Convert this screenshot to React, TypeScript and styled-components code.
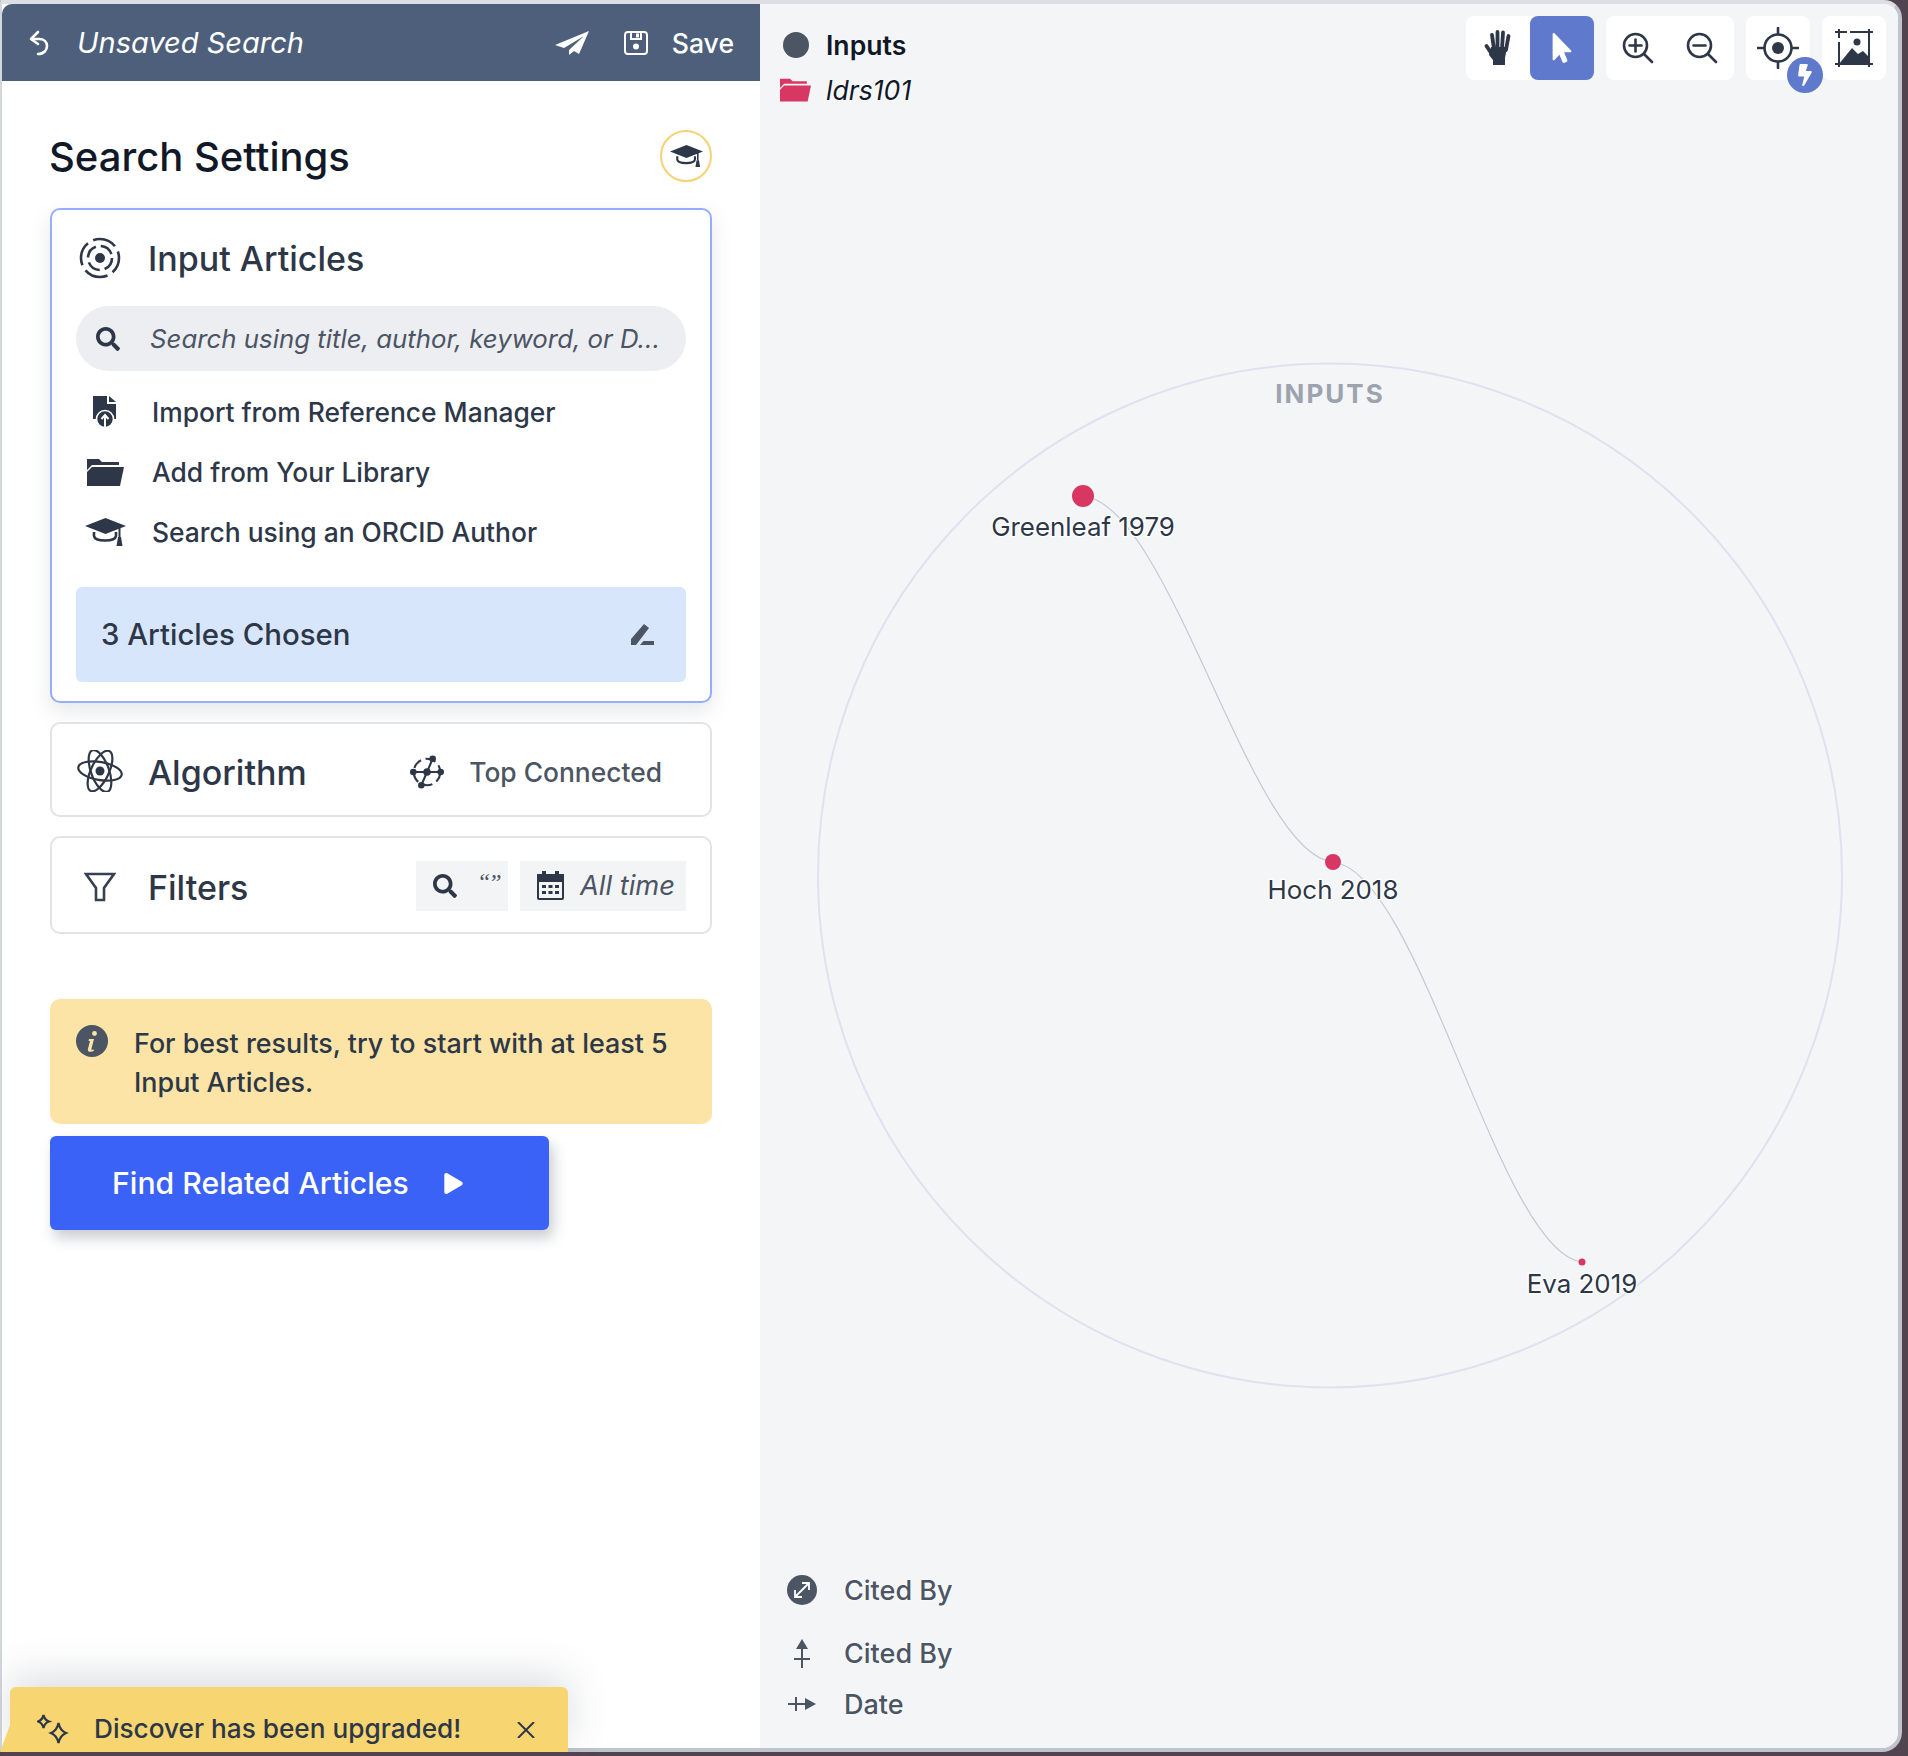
import React from 'react';
import styled, {createGlobalStyle} from 'styled-components';
import {FaBolt, FaMousePointer, FaPlay, FaSearch} from 'react-icons/fa';

const GlobalStyle = createGlobalStyle`
  html, body {
    margin: 0;
    padding: 0;
    background: #52444f;
  }

  * {
    box-sizing: border-box;
  }

  svg {
    flex: none;
    display: block;
  }

  body {
    font-family: Inter, "Open Sans", sans-serif;
    color: #2d3748;
  }
`;

const UndoIcon = () => (
    <svg width="22" height="26" viewBox="0 0 22 26" fill="none" stroke="#fff" strokeWidth="2.6" strokeLinecap="round" strokeLinejoin="round">
        <path d="M9 2 2 9l7 5"/>
        <path d="M3 9h7c5 0 8 3 8 7s-3 8-9 8"/>
    </svg>
);

const PlaneIcon = () => (
    <svg width="34" height="24" viewBox="0 0 34 24" fill="#fff">
        <path d="M34 0 0 14l9 3L29 5 14 19v5l5-4 5 3z"/>
    </svg>
);

const SaveIcon = () => (
    <svg width="24" height="24" viewBox="0 0 24 24" fill="none" stroke="#fff" strokeWidth="2">
        <rect x="1" y="1" width="22" height="22" rx="3"/>
        <path d="M7 1v7h10V1"/>
        <path d="M12 2.500h3v4h-3z" fill="#fff" stroke="none"/>
        <circle cx="12" cy="15.500" r="3" fill="#fff" stroke="none"/>
    </svg>
);

const CapIcon = ({width}: {width: number}) => (
    <svg width={width} height={width * 28 / 41} viewBox="0 0 41 28" fill="#2d3748">
        <path d="M20.500 0 41 8 20.500 16 0 8z"/>
        <path d="M9 14v4c1 6 21 6 22 0v-4" fill="none" stroke="#2d3748" strokeWidth="2.600"/>
        <path d="M34.500 9v10" fill="none" stroke="#2d3748" strokeWidth="2"/>
        <path d="M33 19h3l1.500 9h-6z"/>
    </svg>
);

const FolderIcon = ({width, color}: {width: number; color: string}) => (
    <svg width={width} height={width * 28 / 37} viewBox="0 0 37 28" fill={color}>
        <path d="M0 1h12l3 3h17v3H5l-5 5z"/>
        <path d="M0 28V14l5-5h32l-4 19z"/>
    </svg>
);

const RingsIcon = () => (
    <svg width="42" height="42" viewBox="0 0 42 42" fill="none" stroke="#2d3748" strokeWidth="2.600">
        <circle cx="21" cy="21" r="5" fill="#2d3748" stroke="none"/>
        <circle cx="21" cy="21" r="12" strokeDasharray="14 5"/>
        <circle cx="21" cy="21" r="19" strokeDasharray="24 6" strokeDashoffset="8"/>
    </svg>
);

const FileUploadIcon = () => (
    <svg width="26" height="34" viewBox="0 0 26 34">
        <path d="M1 1h14v8h9v15H1z" fill="#2d3748"/>
        <path d="M17 1l7 6h-7z" fill="#2d3748"/>
        <circle cx="13" cy="24" r="8.500" fill="#2d3748" stroke="#fff" strokeWidth="1.600"/>
        <path d="M13 32v-11M9.500 24l3.500-4 3.500 4" fill="none" stroke="#fff" strokeWidth="2"/>
    </svg>
);

const PenIcon = () => (
    <svg width="23" height="21" viewBox="0 0 23 21" fill="#4b5563">
        <path d="M0 21v-6L13 0l5 4L5 21z"/>
        <path d="M9 21h14v-4H12.500z"/>
    </svg>
);

const AtomIcon = () => (
    <svg width="46" height="42" viewBox="0 0 46 42" fill="none" stroke="#2d3748" strokeWidth="2.200">
        <ellipse cx="23" cy="21" rx="22" ry="9" transform="rotate(10 23 21)"/>
        <ellipse cx="23" cy="21" rx="22" ry="9" transform="rotate(70 23 21)"/>
        <ellipse cx="23" cy="21" rx="22" ry="9" transform="rotate(115 23 21)"/>
        <circle cx="23" cy="21" r="4.500" fill="#2d3748" stroke="none"/>
    </svg>
);

const ConnectedIcon = () => (
    <svg width="34" height="36" viewBox="0 0 36 36" fill="none" stroke="#2d3748" strokeWidth="2.200">
        <circle cx="18" cy="18" r="14" strokeDasharray="11 5"/>
        <path d="M3 18h30M24 4 12 32"/>
        <circle cx="18" cy="18" r="4" fill="#2d3748" stroke="none"/>
        <circle cx="3.500" cy="18" r="3.500" fill="#2d3748" stroke="none"/>
        <circle cx="32.500" cy="18" r="3.500" fill="#2d3748" stroke="none"/>
        <circle cx="24" cy="4" r="3.500" fill="#2d3748" stroke="none"/>
        <circle cx="12" cy="32" r="3.500" fill="#2d3748" stroke="none"/>
    </svg>
);

const FunnelIcon = () => (
    <svg width="32" height="30" viewBox="0 0 32 30" fill="none" stroke="#374151" strokeWidth="2.600">
        <path d="M2 2h28L20 16v12h-8V16z"/>
    </svg>
);

const CalendarIcon = () => (
    <svg width="27" height="29" viewBox="0 0 27 29" fill="#2d3748">
        <path d="M5 0h4v3h9V0h4v3h5v8H0V3h5z"/>
        <path d="M1 10h25v17a1 1 0 0 1-1 1H2a1 1 0 0 1-1-1z" fill="none" stroke="#2d3748" strokeWidth="2"/>
        <path d="M5 14h4v3H5zM11.500 14h4v3h-4zM18 14h4v3h-4zM5 20h4v3H5zM11.500 20h4v3h-4zM18 20h4v3h-4z"/>
    </svg>
);

const InfoIcon = () => (
    <svg width="32" height="32" viewBox="0 0 32 32">
        <circle cx="16" cy="16" r="16" fill="#4b5563"/>
        <circle cx="18.500" cy="8.500" r="2.400" fill="#fbe4a5"/>
        <path d="M13 14h5l-2.600 10c-.2.9.5 1.200 2.600.4l-.3 1.600c-3 1.500-6.500 1-5.800-2L14 16h-1.400z" fill="#fbe4a5"/>
    </svg>
);

const SparkIcon = () => (
    <svg width="32" height="32" viewBox="0 0 32 32" fill="none" stroke="#2d3748" strokeWidth="2.200" strokeLinejoin="miter">
        <path d="M6.500 2Q7.500 7 12 8.500 7.500 10 6.500 15 5.500 10 1 8.500 5.500 7 6.500 2z"/>
        <path d="M21.500 10Q23 17.500 29 20 23 22.500 21.500 30 20 22.500 14 20 20 17.500 21.500 10z"/>
    </svg>
);

const HandIcon = () => (
    <svg width="28" height="38" viewBox="0 0 28 38" fill="none" stroke="#2d3748" strokeWidth="3.800" strokeLinecap="round">
        <path d="M8 6l2 14M13.500 3v17M19 3.500 18 20M24.500 7 22 21M2.500 17l6 9"/>
        <path d="M7 18h16l-2 11v7H9v-5l-4-5z" fill="#2d3748" stroke="none"/>
    </svg>
);

const ZoomIcon = ({plus}: {plus: boolean}) => (
    <svg width="32" height="32" viewBox="0 0 32 32" fill="none" stroke="#2d3748" strokeWidth="2.600" strokeLinecap="round">
        <circle cx="13.500" cy="13.500" r="11.500"/>
        <path d="M22 22l8 8M7.500 13.500h12"/>
        {plus && <path d="M13.500 7.500v12"/>}
    </svg>
);

const TargetIcon = () => (
    <svg width="42" height="42" viewBox="0 0 42 42" fill="none" stroke="#2d3748" strokeWidth="2.600" strokeLinecap="round">
        <circle cx="21" cy="21" r="13.500"/>
        <circle cx="21" cy="21" r="6" fill="#2d3748" stroke="none"/>
        <path d="M21 1v6M21 35v6M1 21h6M35 21h6"/>
    </svg>
);

const ImageCropIcon = () => (
    <svg width="40" height="40" viewBox="0 0 40 40" fill="none" stroke="#2d3748" strokeWidth="2">
        <path d="M1 4h12M16 4h23M1 36h38M5 1v9M5 14v25M35 1v38"/>
        <circle cx="23" cy="14" r="3.500" fill="#2d3748" stroke="none"/>
        <path d="M5 36l13-16 6 6 5-3 6 6v7z" fill="#2d3748" stroke="none"/>
    </svg>
);

const ExpandIcon = () => (
    <svg width="30" height="30" viewBox="0 0 30 30" fill="none" stroke="#fff" strokeWidth="1.800">
        <circle cx="15" cy="15" r="15" fill="#4b5563" stroke="none"/>
        <path d="M8.500 21.500l13-13M15 8h7v7M8 15v7h7"/>
    </svg>
);

const ArrowUpIcon = () => (
    <svg width="18" height="30" viewBox="0 0 18 30" fill="#4b5563">
        <path d="M9 1l6 10H3z"/>
        <path d="M8 10h2v20H8zM1 20h16v2H1z"/>
    </svg>
);

const ArrowRightIcon = () => (
    <svg width="30" height="18" viewBox="0 0 30 18" fill="#4b5563">
        <path d="M29 9 18 3v12z"/>
        <path d="M1 8h20v2H1zM8 2h2v14H8z"/>
    </svg>
);

const CloseIcon = () => (
    <svg width="18" height="16" viewBox="0 0 18 16" stroke="#2d3748" strokeWidth="2">
        <path d="M1 0l16 16M17 0 1 16"/>
    </svg>
);

const nodes = [
    {label: 'Greenleaf 1979', x: 323, y: 492, r: 11, labelY: 522},
    {label: 'Hoch 2018', x: 573, y: 858, r: 8, labelY: 885},
    {label: 'Eva 2019', x: 822, y: 1258, r: 3.5, labelY: 1279},
];

const edges = [
    'M323 492C410 500 490 850 573 858',
    'M573 858C660 867 739 1249 822 1258',
];

const App = () => {
    return (
        <Page>
            <GlobalStyle/>
            <Frame>
                <LeftPanel>
                    <Header>
                        <HeaderLeft>
                            <UndoIcon/>
                            <SearchName>Unsaved Search</SearchName>
                        </HeaderLeft>
                        <HeaderRight>
                            <PlaneIcon/>
                            <SaveGroup>
                                <SaveIcon/>
                                <SaveLabel>Save</SaveLabel>
                            </SaveGroup>
                        </HeaderRight>
                    </Header>
                    <Content>
                        <TitleRow>
                            <Title>Search Settings</Title>
                            <HelpBadge><CapIcon width={33}/></HelpBadge>
                        </TitleRow>
                        <Card $active>
                            <CardHeading>
                                <HeadingIcon><RingsIcon/></HeadingIcon>
                                <CardTitle $offset={1}>Input Articles</CardTitle>
                            </CardHeading>
                            <SearchPill>
                                <FaSearch size={24} color="#2d3748"/>
                                <SearchHint>Search using title, author, keyword, or D...</SearchHint>
                            </SearchPill>
                            <SourceList>
                                <SourceRow><SourceIcon><FileUploadIcon/></SourceIcon>Import from Reference Manager</SourceRow>
                                <SourceRow><SourceIcon><FolderIcon width={37} color="#2d3748"/></SourceIcon>Add from Your Library</SourceRow>
                                <SourceRow><SourceIcon><CapIcon width={41}/></SourceIcon>Search using an ORCID Author</SourceRow>
                            </SourceList>
                            <ChosenBox>
                                <span>3 Articles Chosen</span>
                                <PenIcon/>
                            </ChosenBox>
                        </Card>
                        <Card>
                            <CardRow $height={91}>
                                <HeadingIcon><AtomIcon/></HeadingIcon>
                                <CardTitle $offset={3}>Algorithm</CardTitle>
                                <AlgorithmValue>
                                    <ConnectedIcon/>
                                    <span>Top Connected</span>
                                </AlgorithmValue>
                            </CardRow>
                        </Card>
                        <Card>
                            <CardRow $height={94}>
                                <HeadingIcon><FunnelIcon/></HeadingIcon>
                                <CardTitle $offset={1}>Filters</CardTitle>
                                <Chips>
                                    <Chip $width={92}>
                                        <FaSearch size={24} color="#2d3748"/>
                                        <Quotes>“”</Quotes>
                                    </Chip>
                                    <Chip $width={166}>
                                        <CalendarIcon/>
                                        <ChipLabel>All time</ChipLabel>
                                    </Chip>
                                </Chips>
                            </CardRow>
                        </Card>
                        <Notice>
                            <InfoIcon/>
                            <NoticeText>For best results, try to start with at least 5 Input Articles.</NoticeText>
                        </Notice>
                        <FindButton>
                            Find Related Articles
                            <FaPlay size={21} color="#fff"/>
                        </FindButton>
                    </Content>
                    <Toast>
                        <SparkIcon/>
                        <ToastText>Discover has been upgraded!</ToastText>
                        <ToastClose><CloseIcon/></ToastClose>
                    </Toast>
                </LeftPanel>
                <RightPanel>
                    <Graph width="1138" height="1744">
                        <circle cx="570" cy="871.5" r="512" fill="none" stroke="#dfe1ef" strokeWidth="2"/>
                        <GroupLabel x="570" y="399" textAnchor="middle">INPUTS</GroupLabel>
                        {edges.map(d => <path key={d} d={d} fill="none" stroke="#c3c9d6" strokeWidth="1.2"/>)}
                        {nodes.map(n => (
                            <g key={n.label}>
                                <circle cx={n.x} cy={n.y} r={n.r} fill="#d83764"/>
                                <NodeLabel x={n.x} y={n.labelY} textAnchor="middle" dominantBaseline="central">{n.label}</NodeLabel>
                            </g>
                        ))}
                    </Graph>
                    <TopLegend>
                        <LegendRow $height={36}>
                            <LegendSlot><LegendDot/></LegendSlot>
                            <LegendName>Inputs</LegendName>
                        </LegendRow>
                        <LegendRow $height={54}>
                            <LegendSlot><FolderIcon width={31} color="#d83764"/></LegendSlot>
                            <LegendFolder>ldrs101</LegendFolder>
                        </LegendRow>
                    </TopLegend>
                    <Toolbar>
                        <ToolGroup>
                            <ToolButton><HandIcon/></ToolButton>
                            <ToolButton $active><FaMousePointer size={30} color="#fff"/></ToolButton>
                        </ToolGroup>
                        <ToolGroup>
                            <ToolButton><ZoomIcon plus/></ToolButton>
                            <ToolButton><ZoomIcon plus={false}/></ToolButton>
                        </ToolGroup>
                        <ToolGroup>
                            <ToolButton>
                                <TargetIcon/>
                                <BoltBadge><FaBolt size={22} color="#fff"/></BoltBadge>
                            </ToolButton>
                        </ToolGroup>
                        <ToolGroup>
                            <ToolButton><ImageCropIcon/></ToolButton>
                        </ToolGroup>
                    </Toolbar>
                    <BottomLegend>
                        <KeyRow $height={70}><KeySlot><ExpandIcon/></KeySlot>Cited By</KeyRow>
                        <KeyRow $height={56}><KeySlot><ArrowUpIcon/></KeySlot>Cited By</KeyRow>
                        <KeyRow $height={46}><KeySlot><ArrowRightIcon/></KeySlot>Date</KeyRow>
                    </BottomLegend>
                </RightPanel>
            </Frame>
        </Page>
    )
}

const Page = styled.div`
  width: 1908px;
  height: 1756px;
  overflow: hidden;
  background: #52444f;
`;

const Frame = styled.div`
  width: 1902px;
  height: 1752px;
  display: flex;
  background: #f4f5f7;
  border-style: solid;
  border-width: 4px 4px 4px 2px;
  border-color: #dcdee3 #c0c4ce #c0c4ce #d3d6dd;
  border-radius: 0 18px 20px 0;
`;

const LeftPanel = styled.div`
  position: relative;
  width: 758px;
  flex: none;
  display: flex;
  flex-direction: column;
  background: #fff;
`;

const Header = styled.div`
  height: 77px;
  flex: none;
  display: flex;
  align-items: center;
  justify-content: space-between;
  padding: 0 26px 0 27px;
  background: #4d5f7a;
  border-top-left-radius: 10px;
`;

const HeaderLeft = styled.div`
  display: flex;
  align-items: center;
  gap: 26px;
`;

const SearchName = styled.div`
  font-size: 29px;
  font-style: italic;
  color: #fff;
`;

const HeaderRight = styled.div`
  display: flex;
  align-items: center;
  gap: 35px;
`;

const SaveGroup = styled.div`
  display: flex;
  align-items: center;
  gap: 24px;
`;

const SaveLabel = styled.div`
  font-size: 26.6px;
  font-weight: 500;
  color: #fff;
`;

const Content = styled.div`
  display: flex;
  flex-direction: column;
  padding: 49px 48px 0;
`;

const TitleRow = styled.div`
  height: 52px;
  margin-bottom: 26px;
  display: flex;
  align-items: center;
  justify-content: space-between;
`;

const Title = styled.h1`
  margin: 0 0 0 -1px;
  font-size: 40px;
  font-weight: 500;
  color: #111827;
`;

const HelpBadge = styled.div`
  width: 52px;
  height: 52px;
  display: flex;
  align-items: center;
  justify-content: center;
  border: 2px solid #f6d372;
  border-radius: 50%;
`;

const Card = styled.div<{$active?: boolean}>`
  margin-bottom: 19px;
  background: #fff;
  border: 2px solid ${props => props.$active ? '#93aefb' : '#e2e3e7'};
  border-radius: 10px;
  box-shadow: ${props => props.$active ? '0 8px 20px rgba(107, 114, 128, 0.16)' : 'none'};
  padding: ${props => props.$active ? '28px 24px 19px' : '0'};
`;

const CardHeading = styled.div`
  display: flex;
  align-items: center;
  height: 40px;
`;

const CardRow = styled.div<{$height: number}>`
  display: flex;
  align-items: center;
  height: ${props => props.$height}px;
  padding: 3px 24px 0;
`;

const HeadingIcon = styled.div`
  width: 48px;
  margin-right: 24px;
  flex: none;
  display: flex;
  align-items: center;
  justify-content: center;
`;

const CardTitle = styled.div<{$offset: number}>`
  font-size: 34px;
  font-weight: 500;
  color: #2d3748;
  margin-top: ${props => props.$offset}px;
`;

const SearchPill = styled.div`
  height: 65px;
  margin-top: 28px;
  padding: 0 20px;
  display: flex;
  align-items: center;
  gap: 30px;
  background: #edeef2;
  border-radius: 33px;
`;

const SearchHint = styled.div`
  font-size: 25.8px;
  font-style: italic;
  color: #4b5563;
  white-space: nowrap;
`;

const SourceList = styled.div`
  margin-top: 11px;
  display: flex;
  flex-direction: column;
`;

const SourceRow = styled.div`
  height: 60px;
  display: flex;
  align-items: center;
  font-size: 26.4px;
  font-weight: 500;
  color: #2d3748;
`;

const SourceIcon = styled.div`
  width: 76px;
  flex: none;
  padding-right: 18px;
  display: flex;
  align-items: center;
  justify-content: center;
`;

const ChosenBox = styled.div`
  height: 95px;
  margin-top: 25px;
  padding: 0 32px 0 25px;
  display: flex;
  align-items: center;
  justify-content: space-between;
  font-size: 29.4px;
  font-weight: 500;
  color: #2d3748;
  background: #d8e6fc;
  border-radius: 6px;
`;

const AlgorithmValue = styled.div`
  margin: 2px 0 0 auto;
  padding-right: 24px;
  display: flex;
  align-items: center;
  gap: 25px;
  font-size: 26.4px;
  font-weight: 500;
  color: #4b5563;
`;

const Chips = styled.div`
  margin: -2px 0 0 auto;
  display: flex;
  gap: 12px;
`;

const Chip = styled.div<{$width: number}>`
  width: ${props => props.$width}px;
  height: 50px;
  padding: 0 0 0 17px;
  display: flex;
  align-items: center;
  gap: 16px;
  background: #f3f4f6;
`;

const Quotes = styled.span`
  font-family: "Liberation Serif", serif;
  font-size: 24px;
  font-style: italic;
  letter-spacing: -2px;
  color: #4b5563;
  margin: -6px 0 0 4px;
`;

const ChipLabel = styled.span`
  font-size: 27.3px;
  font-style: italic;
  color: #4b5563;
  white-space: nowrap;
`;

const Notice = styled.div`
  height: 125px;
  margin-top: 46px;
  padding: 26px 26px 0;
  display: flex;
  align-items: flex-start;
  gap: 26px;
  background: #fbe4a5;
  border-radius: 10px;
`;

const NoticeText = styled.div`
  font-size: 26.9px;
  line-height: 39px;
  font-weight: 500;
  color: #2d3748;
  margin-top: -1px;
`;

const FindButton = styled.div`
  width: 499px;
  height: 94px;
  margin-top: 12px;
  padding-left: 62px;
  display: flex;
  align-items: center;
  gap: 34px;
  font-size: 30.2px;
  font-weight: 500;
  color: #fff;
  background: #3b62f6;
  border-radius: 6px;
  box-shadow: 4px 8px 14px rgba(75, 85, 99, 0.3);
`;

const Toast = styled.div`
  position: absolute;
  left: 8px;
  bottom: -4px;
  width: 558px;
  height: 65px;
  padding: 26px 32px 0 27px;
  display: flex;
  align-items: flex-start;
  background: #f7d570;
  border-radius: 6px 6px 0 0;
  box-shadow: 0 -10px 40px rgba(75, 85, 99, 0.2);

  &::before {
    content: '';
    position: absolute;
    left: -10px;
    bottom: 0;
    border-style: solid;
    border-width: 0 0 27px 10px;
    border-color: transparent transparent #f7d570 transparent;
  }
`;

const ToastText = styled.div`
  margin: -2px auto 0 25px;
  font-size: 26.2px;
  line-height: 36px;
  font-weight: 500;
  color: #2d3748;
`;

const ToastClose = styled.div`
  margin: 9px 1px 0 0;
`;

const RightPanel = styled.div`
  position: relative;
  flex: 1;
  background: #f4f5f7;
  border-radius: 0 14px 16px 0;
`;

const Graph = styled.svg`
  position: absolute;
  left: 0;
  top: 0;
`;

const GroupLabel = styled.text`
  font-size: 26px;
  font-weight: 700;
  letter-spacing: 2px;
  fill: #9ca3af;
`;

const NodeLabel = styled.text`
  font-size: 25.9px;
  fill: #2d3748;
  stroke: #fff;
  stroke-width: 2.5px;
  paint-order: stroke;
`;

const TopLegend = styled.div`
  position: absolute;
  left: 20px;
  top: 23px;
  display: flex;
  flex-direction: column;
`;

const LegendRow = styled.div<{$height: number}>`
  height: ${props => props.$height}px;
  display: flex;
  align-items: center;
`;

const LegendSlot = styled.div`
  width: 46px;
  flex: none;
  display: flex;
  align-items: center;
  justify-content: flex-start;
`;

const LegendDot = styled.div`
  width: 26px;
  height: 26px;
  margin-left: 3px;
  border-radius: 50%;
  background: #4b5563;
`;

const LegendName = styled.div`
  font-size: 26.6px;
  font-weight: 600;
  color: #111827;
  text-shadow: 0 0 3px #fff;
`;

const LegendFolder = styled.div`
  font-size: 26.6px;
  font-style: italic;
  color: #111827;
  text-shadow: 0 0 3px #fff;
`;

const Toolbar = styled.div`
  position: absolute;
  top: 12px;
  right: 12px;
  display: flex;
  gap: 12px;
`;

const ToolGroup = styled.div`
  display: flex;
  background: #fff;
  border-radius: 8px;
`;

const ToolButton = styled.div<{$active?: boolean}>`
  position: relative;
  width: 64px;
  height: 64px;
  display: flex;
  align-items: center;
  justify-content: center;
  border-radius: 8px;
  background: ${props => props.$active ? '#5f79cc' : 'transparent'};
`;

const BoltBadge = styled.div`
  position: absolute;
  right: -13px;
  bottom: -13px;
  width: 36px;
  height: 36px;
  display: flex;
  align-items: center;
  justify-content: center;
  border-radius: 50%;
  background: #5f79cc;
`;

const BottomLegend = styled.div`
  position: absolute;
  left: 27px;
  bottom: 21px;
  display: flex;
  flex-direction: column;
`;

const KeyRow = styled.div<{$height: number}>`
  height: ${props => props.$height}px;
  display: flex;
  align-items: center;
  font-size: 27px;
  font-weight: 500;
  color: #4b5563;
  text-shadow: 0 0 3px #fff;
`;

const KeySlot = styled.div`
  width: 57px;
  flex: none;
  padding-right: 27px;
  display: flex;
  align-items: center;
  justify-content: center;
`;

export default App;
